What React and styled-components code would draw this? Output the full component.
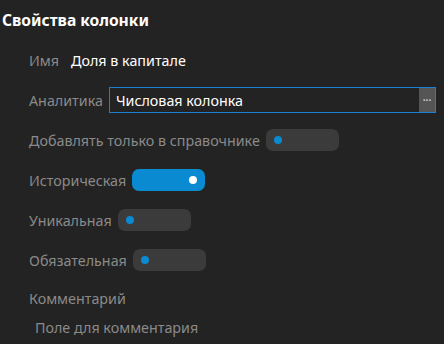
import React from 'react'
import styled, { createGlobalStyle, css } from 'styled-components'

const GlobalStyle = createGlobalStyle`
  html, body {
    margin: 0;
    padding: 0;
    background: #232323;
  }
  body {
    font-family: 'Noto Sans', 'Open Sans', sans-serif;
    font-size: 14.3px;
  }
`

const fields = [
  { label: 'Добавлять только в справочнике', on: false },
  { label: 'Историческая', on: true },
  { label: 'Уникальная', on: false },
  { label: 'Обязательная', on: false },
]

export default function App() {
  return (
    <>
      <GlobalStyle />
      <Panel>
        <Title>Свойства колонки</Title>
        <Form>
          <Row>
            <Label>Имя</Label>
            <Value>Доля в капитале</Value>
          </Row>
          <Row>
            <Label>Аналитика</Label>
            <Picker>
              <PickerText>Числовая колонка</PickerText>
              <PickerButton>···</PickerButton>
            </Picker>
          </Row>
          {fields.map(f => (
            <Row key={f.label}>
              <Label>{f.label}</Label>
              <Toggle on={f.on}>
                <Knob on={f.on} />
              </Toggle>
            </Row>
          ))}
          <CommentLabel>Комментарий</CommentLabel>
          <Placeholder>Поле для комментария</Placeholder>
        </Form>
      </Panel>
    </>
  )
}

const Panel = styled.div`
  width: 444px;
  height: 344px;
  overflow: hidden;
  padding-left: 2px;
  box-sizing: border-box;
`
const Title = styled.h1`
  margin: 0;
  height: 40px;
  display: flex;
  align-items: center;
  color: #ffffff;
  font-size: 15.6px;
  font-weight: 700;
`
const Form = styled.div`
  display: flex;
  flex-direction: column;
  padding-left: 27px;
  padding-right: 8px;
`
const Row = styled.div`
  height: 40px;
  display: flex;
  align-items: center;
  gap: 6px;
`
const Label = styled.span`
  color: #8a8a8a;
  white-space: nowrap;
`
const Value = styled.span`
  color: #ffffff;
  margin-left: 6px;
`
const Picker = styled.div`
  flex: 1;
  height: 26px;
  box-sizing: border-box;
  border: 1px solid #1c7fd6;
  display: flex;
  align-items: stretch;
`
const PickerText = styled.span`
  flex: 1;
  color: #ffffff;
  padding-left: 6px;
  display: flex;
  align-items: center;
`
const PickerButton = styled.span`
  width: 16px;
  background: #555555;
  color: #d0d0d0;
  font-size: 10px;
  font-weight: 700;
  display: flex;
  align-items: center;
  justify-content: center;
`
const Toggle = styled.div`
  width: 73px;
  height: 22px;
  border-radius: 7px;
  background: #3b3b3b;
  position: relative;
  ${({ on }) => on && css`
    background: #0a8ad0;
  `}
`
const Knob = styled.span`
  position: absolute;
  top: 7px;
  left: 8px;
  width: 8px;
  height: 8px;
  border-radius: 50%;
  background: #0a8ad0;
  ${({ on }) => on && css`
    left: auto;
    right: 8px;
    background: #ffffff;
  `}
`
const CommentLabel = styled.div`
  color: #8a8a8a;
  height: 36px;
  display: flex;
  align-items: center;
`
const Placeholder = styled.div`
  color: #8a8a8a;
  padding-left: 6px;
  height: 22px;
  display: flex;
  align-items: center;
`
